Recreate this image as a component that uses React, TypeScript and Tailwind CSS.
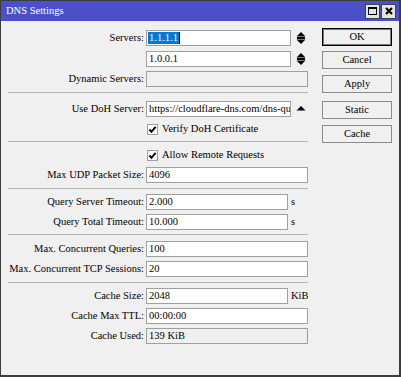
import type { ReactNode } from 'react';

function Field({ className, disabled, children }: { className: string; disabled?: boolean; children?: ReactNode }) {
  return (
    <div
      className={`ml-[2px] h-[16px] border border-[#a0a0a0] flex items-center pl-[2px] overflow-hidden whitespace-nowrap ${
        disabled ? 'bg-[#f0f0f0]' : 'bg-white'
      } ${className}`}
    >
      {children}
    </div>
  );
}

function Row({ label, className = '', children }: { label?: string; className?: string; children?: ReactNode }) {
  return (
    <div className={`flex items-center h-[20px] ${className}`}>
      <span className="w-[143px] shrink-0 text-right whitespace-nowrap">{label}</span>
      {children}
    </div>
  );
}

function Sep({ className }: { className: string }) {
  return <div className={`ml-[7px] w-[300px] h-px bg-[#b4b4b4] ${className}`} />;
}

function Spinner() {
  return (
    <svg width="10" height="14" viewBox="0 0 10 14" className="ml-[5px]">
      <polygon points="0.5,5.5 5,1 9.5,5.5" fill="#000" />
      <rect x="1" y="6" width="8" height="2" fill="#000" />
      <polygon points="0.5,8.5 5,13 9.5,8.5" fill="#000" />
    </svg>
  );
}

function Check({ label }: { label: string }) {
  return (
    <>
      <div className="ml-[3px] w-[11px] h-[11px] border border-[#a0a0a0] bg-white flex items-center justify-center">
        <svg width="9" height="9" viewBox="0 0 9 9">
          <path d="M1.5 4.5 L3.5 6.8 L7.6 1.8" fill="none" stroke="#000" strokeWidth="2" />
        </svg>
      </div>
      <span className="ml-[4px] whitespace-nowrap">{label}</span>
    </>
  );
}

function Btn({ label, className = '' }: { label: string; className?: string }) {
  return (
    <div className={`w-[70px] h-[18px] flex items-center justify-center bg-[#f0f0f0] border border-[#8c8c8c] ${className}`}>
      {label}
    </div>
  );
}

export default function App() {
  return (
    <div className="w-[401px] h-[377px] flex flex-col border-l border-t border-r-2 border-b-2 border-[#3c3c3c] bg-[#f0f0f0] text-black text-[10.5px] leading-none font-normal [font-family:'Liberation_Serif',serif]">
      {/* Title bar */}
      <div className="h-[20px] bg-[#4c50c8] flex items-center pl-[5px] pr-[3px]">
        <span className="text-white">DNS Settings</span>
        <div className="ml-auto flex gap-[1px]">
          <div className="w-[15px] h-[15px] bg-[#e4e4e4] border border-[#404040] flex items-center justify-center">
            <div className="w-[9px] h-[8px] border border-t-2 border-black" />
          </div>
          <div className="w-[15px] h-[15px] bg-[#e4e4e4] border border-[#404040] flex items-center justify-center">
            <svg width="8" height="8" viewBox="0 0 8 8">
              <path d="M1 1 L7 7 M7 1 L1 7" stroke="#000" strokeWidth="2" />
            </svg>
          </div>
        </div>
      </div>

      {/* Body */}
      <div className="flex flex-1">
        <div className="w-[321px] pt-[7px] flex flex-col">
          <Row label="Servers:">
            <Field className="w-[145px]">
              <span className="bg-[#0078d7] text-white px-[1px] -ml-[1px] leading-[12px]">1.1.1.1</span>
              <span className="w-px h-[12px] bg-black" />
            </Field>
            <Spinner />
          </Row>
          <Row className="mt-[1px]">
            <Field className="w-[145px]">1.0.0.1</Field>
            <Spinner />
          </Row>
          <Row label="Dynamic Servers:">
            <Field className="w-[162px]" disabled />
          </Row>

          <Sep className="mt-[3px]" />

          <Row label="Use DoH Server:" className="mt-[6px]">
            <Field className="w-[145px]">https://cloudflare-dns.com/dns-query</Field>
            <svg width="10" height="6" viewBox="0 0 10 6" className="ml-[5px] mb-[3px]">
              <polygon points="0.5,5.5 5,1 9.5,5.5" fill="#000" />
            </svg>
          </Row>
          <Row>
            <Check label="Verify DoH Certificate" />
          </Row>

          <Sep className="mt-[2px]" />

          <Row className="mt-[3px]">
            <Check label="Allow Remote Requests" />
          </Row>
          <Row label="Max UDP Packet Size:">
            <Field className="w-[162px]">4096</Field>
          </Row>

          <Sep className="mt-[3px]" />

          <Row label="Query Server Timeout:" className="mt-[3px]">
            <Field className="w-[142px]">2.000</Field>
            <span className="ml-[3px]">s</span>
          </Row>
          <Row label="Query Total Timeout:">
            <Field className="w-[142px]">10.000</Field>
            <span className="ml-[3px]">s</span>
          </Row>

          <Sep className="mt-[2px]" />

          <Row label="Max. Concurrent Queries:" className="mt-[4px]">
            <Field className="w-[162px]">100</Field>
          </Row>
          <Row label="Max. Concurrent TCP Sessions:">
            <Field className="w-[162px]">20</Field>
          </Row>

          <Sep className="mt-[3px]" />

          <Row label="Cache Size:" className="mt-[3px]">
            <Field className="w-[142px]">2048</Field>
            <span className="ml-[3px]">KiB</span>
          </Row>
          <Row label="Cache Max TTL:">
            <Field className="w-[162px]">00:00:00</Field>
          </Row>
          <Row label="Cache Used:">
            <Field className="w-[162px]" disabled>
              139 KiB
            </Field>
          </Row>
        </div>

        {/* Buttons */}
        <div className="pt-[7px] flex flex-col">
          <Btn label="OK" className="border-black shadow-[inset_0_0_0_1px_#7a7a7a]" />
          <Btn label="Cancel" className="mt-[5px]" />
          <Btn label="Apply" className="mt-[6px]" />
          <Btn label="Static" className="mt-[8px]" />
          <Btn label="Cache" className="mt-[6px]" />
        </div>
      </div>
    </div>
  );
}
